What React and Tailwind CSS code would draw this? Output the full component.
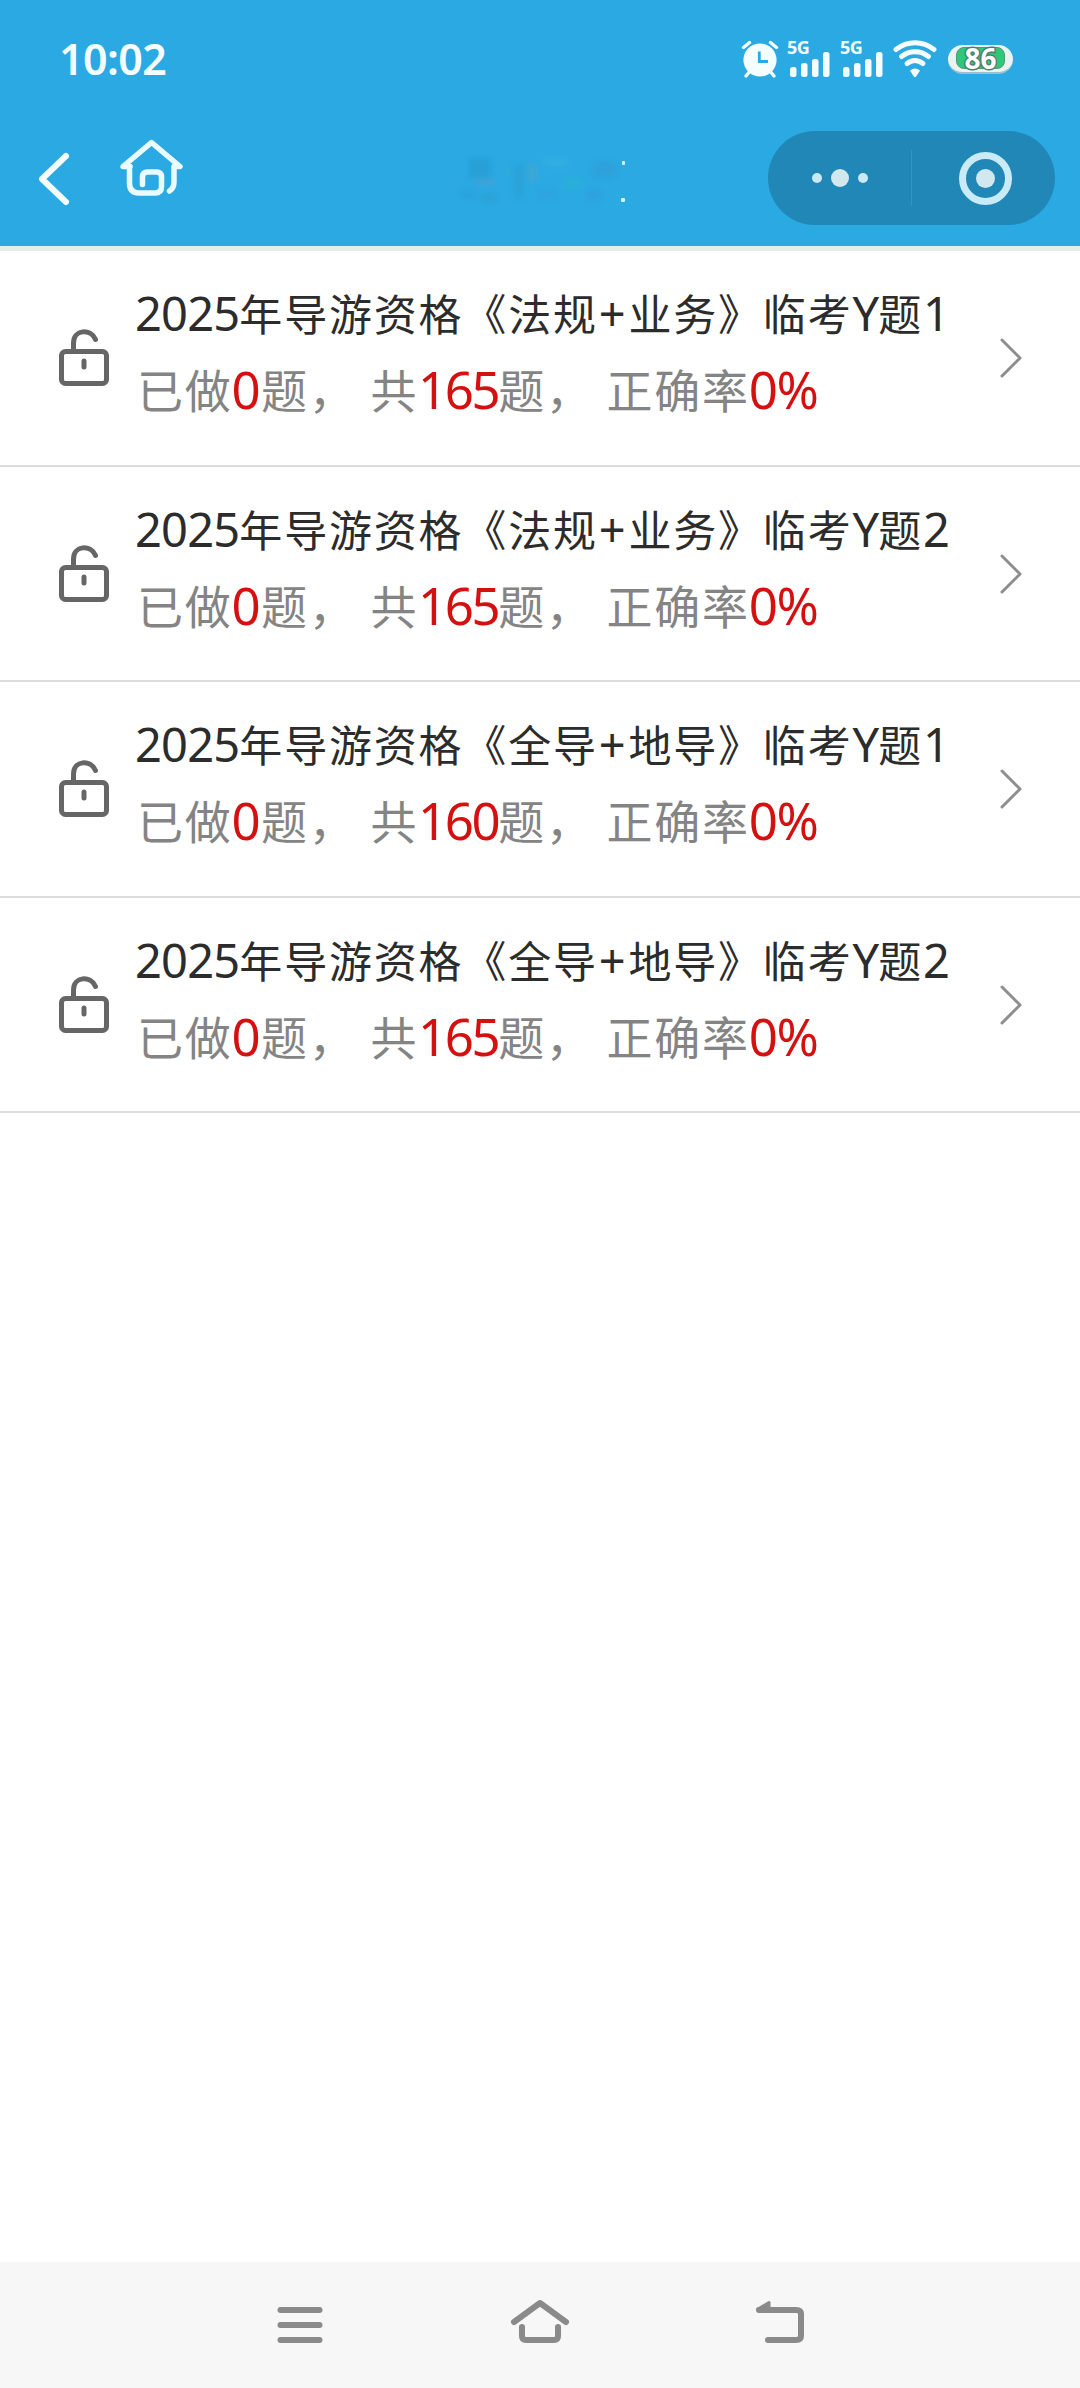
import React from "react";

const papers = [
  { id: 1, title: "2025年导游资格《法规+业务》临考Y题1", done: 0, total: 165, rate: "0%" },
  { id: 2, title: "2025年导游资格《法规+业务》临考Y题2", done: 0, total: 165, rate: "0%" },
  { id: 3, title: "2025年导游资格《全导+地导》临考Y题1", done: 0, total: 160, rate: "0%" },
  { id: 4, title: "2025年导游资格《全导+地导》临考Y题2", done: 0, total: 165, rate: "0%" },
];

function Signal() {
  return (
    <div className="w-[44px] h-[40px] flex flex-col">
      <span className="h-[16px] leading-[16px] text-[18px] font-bold tracking-[-0.5px] text-[#f4fdff]">5G</span>
      <svg className="w-[44px] h-[26px] -mt-[3px] shrink-0" viewBox="0 0 44 26" fill="#f4fdff">
        <rect x="3" y="15" width="6.5" height="10" rx="2.5" />
        <rect x="14" y="11" width="6.5" height="14" rx="2.5" />
        <rect x="25" y="7" width="6.5" height="18" rx="2.5" />
        <rect x="36" y="0" width="6.5" height="25" rx="2.5" />
      </svg>
    </div>
  );
}

function StatusBar() {
  return (
    <div className="h-[118px] flex items-center justify-between pl-[59px] pr-[67px]">
      <span className="text-[43px] leading-none font-semibold text-[#f4fdff] tracking-[-0.6px] -mt-[2px]">10:02</span>
      <div className="flex items-center">
        {/* Alarm */}
        <svg className="w-[38px] h-[38px] mr-[8px]" viewBox="0 0 38 38" fill="none">
          <g stroke="#f4fdff" strokeWidth="3.4" strokeLinecap="round">
            <path d="M2.5 7.5L8.5 2.5M35.5 7.5L29.5 2.5M9 31L5 36M29 31L33 36" />
          </g>
          <circle cx="19" cy="20" r="16.6" fill="#f4fdff" />
          <path d="M18.3 11.5V21.5H27" stroke="#2ba9e3" strokeWidth="2.8" />
        </svg>
        <div className="flex gap-[9px]">
          <Signal />
          <Signal />
        </div>
        {/* Wifi */}
        <svg className="w-[44px] h-[38px] ml-[9px]" viewBox="0 0 44 38" fill="none">
          <g stroke="#f4fdff" strokeWidth="5" strokeLinecap="round">
            <path d="M3 9.5C14.5 0.5 29.5 0.5 41 9.5" />
            <path d="M8.5 16.5C16.5 10 27.5 10 35.5 16.5" />
            <path d="M14 23.5C19 19.5 25 19.5 30 23.5" />
          </g>
          <path d="M17 30.5Q22 26.5 27 30.5L23.2 36.5Q22 38 20.8 36.5Z" fill="#f4fdff" />
        </svg>
        {/* Battery */}
        <div className="ml-[11px] w-[65px] h-[29px] rounded-full bg-[#e9f3f0] border-b-2 border-[#9cc0cb] flex items-center justify-center">
          <div className="w-[49px] h-[22px] rounded-[8px] bg-[#2dc978] border border-[#5a9378] flex items-center justify-center">
            <span className="text-[28px] leading-[38px] -my-[9px] font-bold text-white [-webkit-text-stroke:3px_#4f7f6c] [paint-order:stroke_fill]">
              86
            </span>
          </div>
        </div>
      </div>
    </div>
  );
}

function NavBar() {
  return (
    <div className="h-[128px] flex items-start pl-[37px] pr-[25px]">
      <svg className="w-[34px] h-[56px] mt-[33px] shrink-0" viewBox="0 0 34 56" fill="none" stroke="#f4fdff" strokeWidth="6" strokeLinecap="round" strokeLinejoin="round">
        <path d="M29 5L5 28L29 51" />
      </svg>
      <svg className="w-[66px] h-[60px] mt-[20px] ml-[48px] shrink-0" viewBox="0 0 66 60" fill="none" stroke="#e9fbff" strokeWidth="5.5" strokeLinecap="round" strokeLinejoin="round">
        <path d="M11 28.5H4L32.5 4.5L61 28.5H55V44Q55 50 50.5 53" />
        <path d="M10.5 28.5V45Q10.5 55 20 55H36Q42.5 55 42.5 48.5V39Q42.5 34 37.5 34H28.5Q23.5 34 23.5 39V46.5" />
      </svg>
      {/* Masked page title */}
      <svg className="w-[180px] h-[56px] mt-[36px] ml-[262px] shrink-0" viewBox="0 0 180 56">
        <g opacity="0.22" className="blur-[3px]">
          <rect x="22" y="4" width="22" height="20" fill="#1d7fae" />
          <rect x="28" y="25" width="20" height="6" fill="#9a8fa8" />
          <rect x="14" y="36" width="14" height="8" fill="#2a86c8" />
          <rect x="34" y="40" width="16" height="7" fill="#3b8396" />
          <rect x="54" y="12" width="10" height="12" fill="#34b4c0" />
          <rect x="68" y="10" width="8" height="34" fill="#2f86a8" />
          <rect x="82" y="10" width="7" height="18" fill="#a59c8f" />
          <rect x="96" y="4" width="26" height="8" fill="#4fc8d8" />
          <rect x="92" y="36" width="18" height="8" fill="#3a8fd0" />
          <rect x="116" y="24" width="20" height="10" fill="#27c9b4" />
          <rect x="146" y="8" width="24" height="16" fill="#3f86b8" />
          <rect x="140" y="36" width="14" height="10" fill="#3f86c8" />
        </g>
        <rect x="175" y="7" width="3" height="4" rx="1" fill="#d5f0ee" />
        <rect x="174" y="44" width="4" height="4" rx="1" fill="#d5f0ee" />
      </svg>
      <div className="ml-auto mt-[13px] w-[287px] h-[94px] rounded-full bg-[#2187b7] flex items-center">
        <div className="w-[143px] flex items-center justify-center gap-[9px]">
          <span className="w-[10px] h-[10px] rounded-full bg-[#c9e9f5]" />
          <span className="w-[18px] h-[18px] rounded-full bg-[#d3e7ef]" />
          <span className="w-[10px] h-[10px] rounded-full bg-[#c9e9f5]" />
        </div>
        <div className="w-px h-[56px] bg-[#2f95c4]" />
        <div className="flex-1 flex items-center justify-center pl-[4px]">
          <div className="w-[53px] h-[53px] rounded-full border-[7px] border-[#c9ebf8] flex items-center justify-center">
            <span className="w-[19px] h-[19px] rounded-full bg-[#d3e7ef]" />
          </div>
        </div>
      </div>
    </div>
  );
}

function PaperTitle({ text }) {
  // Latin characters and digits run slightly larger than the Chinese text
  const parts = text.split(/(\+|[0-9A-Z]+)/).filter(Boolean);
  return (
    <h2 className="h-[75px] leading-[76px] text-[43px] tracking-[1.8px] text-[#2c2c2c] whitespace-nowrap">
      {parts.map((part, i) => {
        if (part === "+") {
          return (
            <span key={i} className="font-['Noto_Sans'] text-[47px] leading-none ml-px mr-px">
              +
            </span>
          );
        }
        return /[0-9A-Z]/.test(part) ? (
          <span key={i} className="font-['Noto_Sans'] text-[47px] leading-none tracking-[-0.8px]">
            {part}
          </span>
        ) : (
          <span key={i}>{part}</span>
        );
      })}
    </h2>
  );
}

function Num({ children, className = "tracking-[-0.4px]" }) {
  return (
    <span className={`font-['Noto_Sans'] text-[51px] leading-none text-[#d41010] ${className}`}>{children}</span>
  );
}

function PaperRow({ paper }) {
  return (
    <li className="h-[215.5px] flex items-start border-b-2 border-[#dcdcdc] pl-[57px] pr-[57px]">
      <svg className="w-[54px] h-[60px] mt-[77px] shrink-0" viewBox="0 0 54 60" fill="none" stroke="#666666" strokeWidth="5" strokeLinecap="round">
        <rect x="4.5" y="23.5" width="45" height="32" rx="4" />
        <path d="M16.5 23V15C16.5 1.5 33.5 0 38.5 11.5" />
        <path d="M27 33V39" />
      </svg>
      <div className="ml-[24px] mt-[26px]">
        <PaperTitle text={paper.title} />
        <p className="h-[76px] leading-[76px] pl-[2px] text-[46px] tracking-[1.7px] text-[#848484] whitespace-nowrap">
          <span className="align-[1px]">已做</span>
          <Num className="-ml-px tracking-[0.4px]">{paper.done}</Num>
          <span className="mr-[14px] align-[1px]">题，</span>
          <span className="align-[1px]">共</span>
          <Num className="tracking-[-2.5px]">{paper.total}</Num>
          <span className="mr-[13px] align-[1px]">题，</span>
          <span className="align-[1px]">正确率</span>
          <Num className="-ml-px tracking-[-1.2px]">{paper.rate}</Num>
        </p>
      </div>
      <svg className="w-[24px] h-[42px] mt-[86px] ml-auto shrink-0" viewBox="0 0 24 42" fill="none" stroke="#8e8e8e" strokeWidth="3" strokeLinecap="round" strokeLinejoin="round">
        <path d="M3 3L21 21L3 39" />
      </svg>
    </li>
  );
}

function SystemNav() {
  return (
    <footer className="h-[126px] bg-[#f7f7f7] flex items-start justify-between pt-[36px] px-[274px]">
      <svg className="w-[52px] h-[52px]" viewBox="0 0 52 52" fill="none" stroke="#8a8a8a" strokeWidth="6" strokeLinecap="round">
        <path d="M6.5 12H45.5M6.5 27H45.5M6.5 42H45.5" />
      </svg>
      <svg className="w-[60px] h-[52px]" viewBox="0 0 60 52" fill="none" stroke="#8a8a8a" strokeWidth="6" strokeLinecap="round" strokeLinejoin="round">
        <path d="M4 24L30 5L56 24" />
        <path d="M12 29V38Q12 42 16 42H44Q48 42 48 38V29" />
      </svg>
      <svg className="w-[52px] h-[52px]" viewBox="0 0 52 52" fill="none" stroke="#8a8a8a" strokeWidth="6" strokeLinecap="round" strokeLinejoin="round">
        <path d="M5 12H42Q47 12 47 16V38Q47 42 42 42H14" />
        <path d="M4 11L15 4.5V12Z" fill="#8a8a8a" strokeWidth="3" />
      </svg>
    </footer>
  );
}

export default function App() {
  return (
    <div className="w-[1080px] h-[2388px] flex flex-col bg-white font-['Noto_Sans','Noto_Sans_CJK_SC',sans-serif]">
      <header className="h-[246px] shrink-0 bg-[#2aa9e3]">
        <StatusBar />
        <NavBar />
      </header>
      <div className="h-[6px] shrink-0 bg-[#e6eeec] border-b border-[#d8dcda]" />
      <main className="flex-1 bg-white -mt-px">
        <ul>
          {papers.map((paper) => (
            <PaperRow key={paper.id} paper={paper} />
          ))}
        </ul>
      </main>
      <SystemNav />
    </div>
  );
}
